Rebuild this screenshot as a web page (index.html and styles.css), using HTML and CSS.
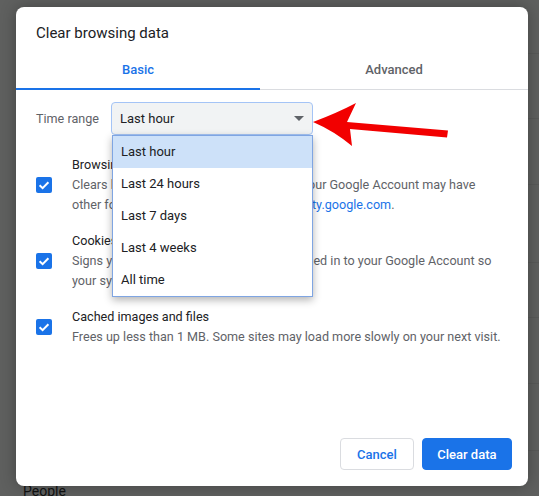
FILE: index.html
```html
<!DOCTYPE html>
<html>
<head>
<meta charset="utf-8">
<link rel="stylesheet" href="styles.css">
</head>
<body>
<div class="page">
  <div class="page-rows">
    <div class="page-row r1"></div>
    <div class="page-row r2"></div>
    <div class="page-row r3"></div>
    <div class="page-row r4"></div>
    <div class="page-row r5"></div>
    <div class="page-row r6"></div>
    <div class="page-row r7"></div>
  </div>
  <div class="people">People</div>
</div>

<div class="dialog">
  <div class="dialog-title">Clear browsing data</div>
  <div class="tabs">
    <div class="tab tab-basic active">Basic</div>
    <div class="tab tab-advanced">Advanced</div>
  </div>
  <div class="dialog-body">
    <div class="time-row">
      <div class="time-label">Time range</div>
      <div class="select">
        <span class="select-value">Last hour</span>
        <svg class="select-arrow" width="10" height="5" viewBox="0 0 10 5"><polygon points="0,0 10,0 5,5" fill="#5f6368"/></svg>
        <div class="dropdown">
          <div class="option selected">Last hour</div>
          <div class="option">Last 24 hours</div>
          <div class="option">Last 7 days</div>
          <div class="option">Last 4 weeks</div>
          <div class="option">All time</div>
        </div>
      </div>
    </div>
    <div class="items">
      <div class="item">
        <div class="checkbox"><svg width="16" height="16" viewBox="0 0 16 16"><path d="M3.6 8.2 L6.6 11.1 L12.4 5.2" fill="none" stroke="#fff" stroke-width="2"/></svg></div>
        <div class="item-text">
          <div class="item-title">Browsing history</div>
          <div class="item-desc">Clears history from all signed-in devices. Your Google Account may have other forms of browsing history at <span class="link">myactivity.google.com</span>.</div>
        </div>
      </div>
      <div class="item">
        <div class="checkbox"><svg width="16" height="16" viewBox="0 0 16 16"><path d="M3.6 8.2 L6.6 11.1 L12.4 5.2" fill="none" stroke="#fff" stroke-width="2"/></svg></div>
        <div class="item-text">
          <div class="item-title">Cookies and other site data</div>
          <div class="item-desc">Signs you out of most sites. You'll stay signed in to your Google Account so your synced data can be cleared.</div>
        </div>
      </div>
      <div class="item">
        <div class="checkbox"><svg width="16" height="16" viewBox="0 0 16 16"><path d="M3.6 8.2 L6.6 11.1 L12.4 5.2" fill="none" stroke="#fff" stroke-width="2"/></svg></div>
        <div class="item-text">
          <div class="item-title">Cached images and files</div>
          <div class="item-desc">Frees up less than 1 MB. Some sites may load more slowly on your next visit.</div>
        </div>
      </div>
    </div>
  </div>
  <div class="dialog-footer">
    <button class="btn btn-cancel">Cancel</button>
    <button class="btn btn-primary">Clear data</button>
  </div>
</div>

<svg class="annot-arrow" width="147" height="52" viewBox="305 98 147 52">
  <path d="M313,122 Q337,113 356,103 L347,122 L448,130.5 L447,137.5 L350,129 L352,146 Q334,131 313,122 Z" fill="#f20000"/>
</svg>
</body>
</html>
```

FILE: styles.css
```css
html, body {
  margin: 0;
  padding: 0;
}
body {
  width: 539px;
  height: 496px;
  overflow: hidden;
  position: relative;
  background: #5f605f;
  font-family: Roboto, "Noto Sans", "Liberation Sans", sans-serif;
}

.page {
  display: flex;
  flex-direction: column;
}
.page-rows {
  display: flex;
  flex-direction: column;
  margin-left: 40px;
}
.page-row {
  box-sizing: border-box;
  border-bottom: 1px solid #595a59;
}
.r1 { height: 54px; }
.r2 { height: 65px; }
.r3 { height: 66px; }
.r4 { height: 78px; }
.r5 { height: 55px; }
.r6 { height: 66px; }
.r7 { height: 67px; }

.people {
  margin-top: 30px;
  padding-left: 23px;
  font-size: 14px;
  line-height: 20px;
  color: #111212;
}

.dialog {
  position: absolute;
  left: 16px;
  top: 7px;
  width: 512px;
  height: 479px;
  background: #fff;
  border-radius: 8px;
  box-shadow: 0 0 16px rgba(0, 0, 0, 0.3);
  display: flex;
  flex-direction: column;
}

.dialog-title {
  padding: 16px 20px 0;
  font-size: 15px;
  line-height: 20px;
  color: #202124;
}

.tabs {
  display: flex;
  margin-top: 7px;
  height: 39px;
  border-bottom: 1px solid #dadce0;
}
.tab {
  position: relative;
  display: flex;
  align-items: center;
  justify-content: center;
  font-size: 13px;
  font-weight: 500;
  color: #5f6368;
}
.tab-basic { width: 244px; }
.tab-advanced { flex: 1; }
.tab.active { color: #1a73e8; }
.tab.active::after {
  content: "";
  position: absolute;
  left: 0;
  right: 0;
  bottom: -1px;
  height: 2px;
  background: #1a73e8;
}

.dialog-body {
  flex: 1;
  padding: 12px 20px 0;
}

.time-row {
  display: flex;
  align-items: center;
}
.time-label {
  width: 75px;
  font-size: 12.6px;
  color: #5f6368;
}
.select {
  position: relative;
  box-sizing: border-box;
  width: 202px;
  height: 33px;
  border: 1px solid #a4c4f6;
  border-radius: 4px;
  background: #f1f3f4;
  display: flex;
  align-items: center;
  padding-left: 8px;
  font-size: 13px;
  color: #202124;
}
.select-arrow {
  margin-left: auto;
  margin-right: 8px;
}
.dropdown {
  position: absolute;
  left: 0;
  top: calc(100% + 1px);
  z-index: 5;
  box-sizing: border-box;
  width: 201px;
  background: #fff;
  border: 1px solid #7fa5e2;
  box-shadow: 0 3px 8px rgba(0, 0, 0, 0.3);
}
.option {
  height: 32px;
  line-height: 32px;
  padding-left: 8px;
  font-size: 13px;
  color: #202124;
}
.option.selected { background: #cde1f9; }

.items {
  margin-top: 20px;
  display: flex;
  flex-direction: column;
  gap: 16px;
}
.item {
  display: flex;
  align-items: center;
}
.checkbox {
  flex: none;
  width: 16px;
  height: 16px;
  border-radius: 2px;
  background: #1a73e8;
  margin-right: 20px;
}
.checkbox svg { display: block; }
.item-text {
  max-width: 433px;
  font-size: 12.6px;
  line-height: 20px;
}
.item-title { color: #202124; }
.item-desc { color: #5f6368; }
.link { color: #1a73e8; }

.dialog-footer {
  display: flex;
  justify-content: flex-end;
  gap: 8px;
  padding: 0 16px 16px;
}
.btn {
  box-sizing: border-box;
  height: 32px;
  border-radius: 4px;
  font-family: Roboto, "Noto Sans", sans-serif;
  font-size: 13px;
  font-weight: 500;
  cursor: pointer;
}
.btn-cancel {
  padding: 0 16px;
  background: #fff;
  color: #1a73e8;
  border: 1px solid #dadce0;
}
.btn-primary {
  padding: 0 14.5px;
  background: #1a73e8;
  color: #fff;
  border: 1px solid #1a73e8;
}

.annot-arrow {
  position: absolute;
  left: 305px;
  top: 98px;
  z-index: 10;
}
```
